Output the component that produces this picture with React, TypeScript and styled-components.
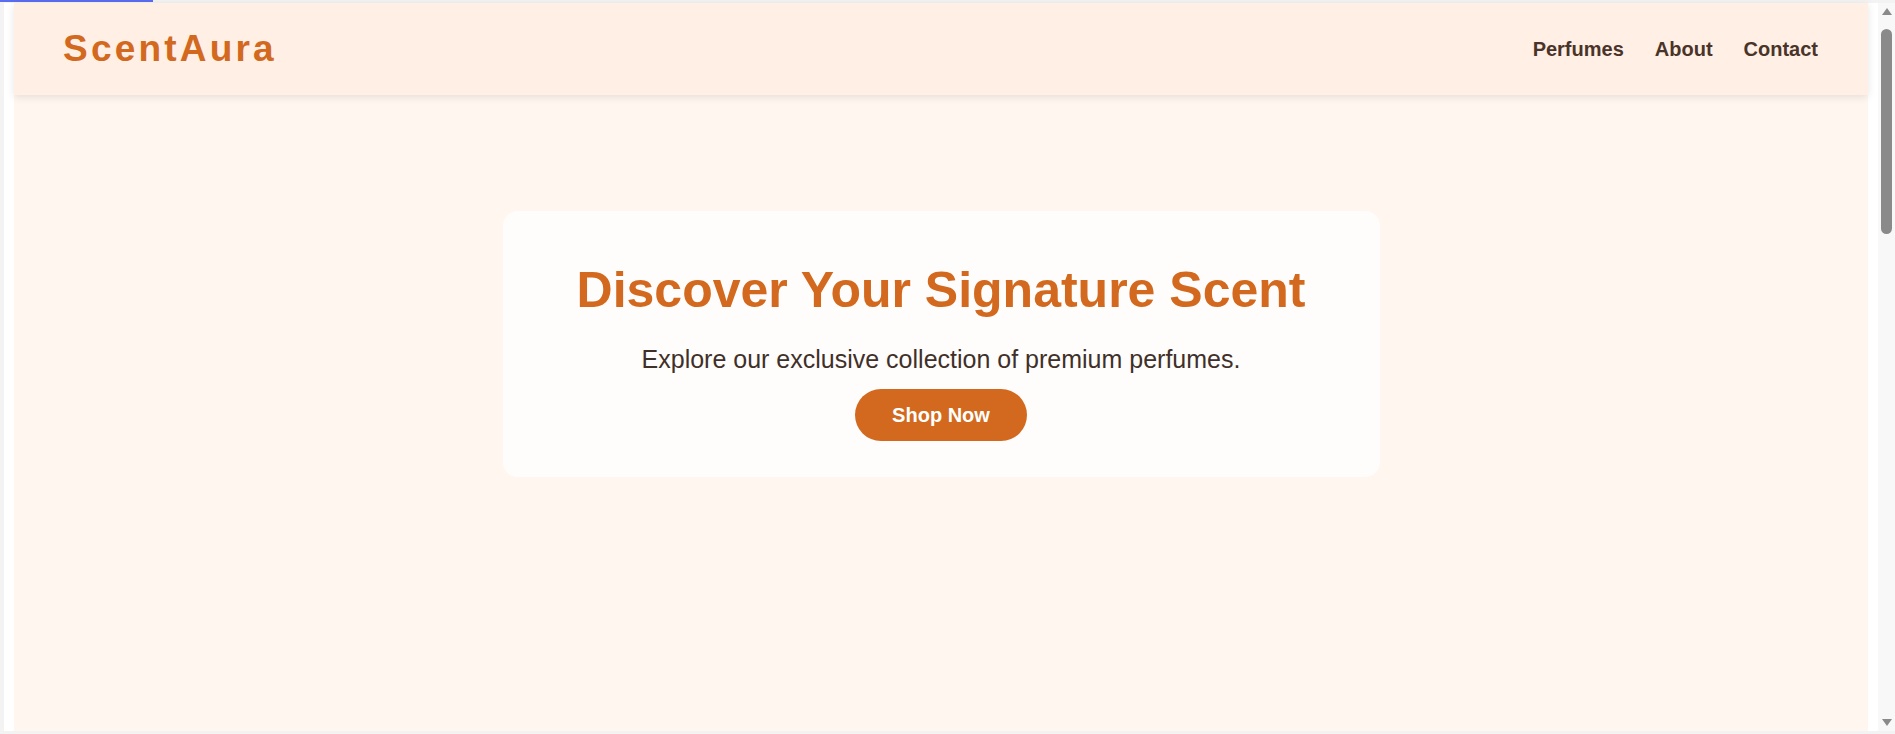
import React from "react";
import styled, { createGlobalStyle } from "styled-components";

const GlobalStyle = createGlobalStyle`
  html, body {
    margin: 0;
    padding: 0;
    background: #f3f3f3;
    overflow: hidden;
  }
  * { box-sizing: border-box; }
`;

const Screen = styled.div`
  width: 1895px;
  height: 734px;
  display: flex;
  flex-direction: column;
  font-family: "Liberation Sans", Arial, sans-serif;
`;

const TopStrip = styled.div`
  height: 3px;
  flex: none;
`;

const LoadBar = styled.div`
  width: 153px;
  height: 2px;
  background: #5a6df0;
`;

const Frame = styled.div`
  flex: 1;
  margin-left: 4px;
  display: flex;
  background: #ffffff;
  min-height: 0;
`;

const BottomStrip = styled.div`
  height: 3px;
  flex: none;
`;

const Page = styled.div`
  flex: 1;
  margin: 0 10px;
  background: #fff6f0;
  display: flex;
  flex-direction: column;
`;

const Header = styled.header`
  height: 92px;
  flex: none;
  background: #ffefe5;
  box-shadow: 0 2px 8px rgba(0, 0, 0, 0.1);
  display: flex;
  align-items: center;
  justify-content: space-between;
  padding: 0 50px 0 49px;
  position: relative;
  z-index: 1;
`;

const Logo = styled.div`
  font-size: 37px;
  font-weight: 700;
  letter-spacing: 3.2px;
  color: #d2691e;
`;

const Nav = styled.nav`
  display: flex;
  gap: 31px;
`;

const NavLink = styled.a`
  font-size: 20px;
  font-weight: 700;
  color: #4a3429;
  text-decoration: none;
`;

const Hero = styled.section`
  flex: 1;
  display: flex;
  justify-content: center;
  align-items: flex-start;
  padding-top: 116px;
`;

const Card = styled.div`
  width: 877px;
  height: 266px;
  background: #fffdfb;
  border-radius: 15px;
  padding: 50px 40px 0;
  text-align: center;
`;

const Title = styled.h1`
  margin: 0 0 26px;
  font-size: 50px;
  font-weight: 700;
  color: #d2691e;
  line-height: normal;
`;

const Subtitle = styled.p`
  margin: 0 0 15px;
  font-size: 25px;
  color: #3f302a;
  line-height: normal;
`;

const ShopButton = styled.button`
  font-family: "Liberation Sans", Arial, sans-serif;
  font-size: 20px;
  font-weight: 700;
  line-height: 24px;
  color: #ffffff;
  background: #d2691e;
  border: none;
  border-radius: 30px;
  padding: 14px 37px;
  cursor: pointer;
`;

const Scrollbar = styled.div`
  width: 17px;
  flex: none;
  background: #f8f8f8;
  display: flex;
  flex-direction: column;
  align-items: center;
  padding: 5px 0 5px;
`;

const Arrow = styled.div<{ $down?: boolean }>`
  width: 0;
  height: 0;
  border-left: 5px solid transparent;
  border-right: 5px solid transparent;
  ${(p) =>
    p.$down
      ? "border-top: 7px solid #8a8a8a; margin-top: auto;"
      : "border-bottom: 7px solid #8a8a8a;"}
  flex: none;
`;

const Thumb = styled.div`
  width: 11px;
  height: 205px;
  margin-top: 14px;
  background: #8a8a8a;
  border-radius: 6px;
`;

export default function App() {
  return (
    <>
      <GlobalStyle />
      <Screen>
        <TopStrip>
          <LoadBar />
        </TopStrip>
        <Frame>
          <Page>
            <Header>
              <Logo>ScentAura</Logo>
              <Nav>
                <NavLink href="#">Perfumes</NavLink>
                <NavLink href="#">About</NavLink>
                <NavLink href="#">Contact</NavLink>
              </Nav>
            </Header>
            <Hero>
              <Card>
                <Title>Discover Your Signature Scent</Title>
                <Subtitle>Explore our exclusive collection of premium perfumes.</Subtitle>
                <ShopButton>Shop Now</ShopButton>
              </Card>
            </Hero>
          </Page>
          <Scrollbar>
            <Arrow />
            <Thumb />
            <Arrow $down />
          </Scrollbar>
        </Frame>
        <BottomStrip />
      </Screen>
    </>
  );
}
